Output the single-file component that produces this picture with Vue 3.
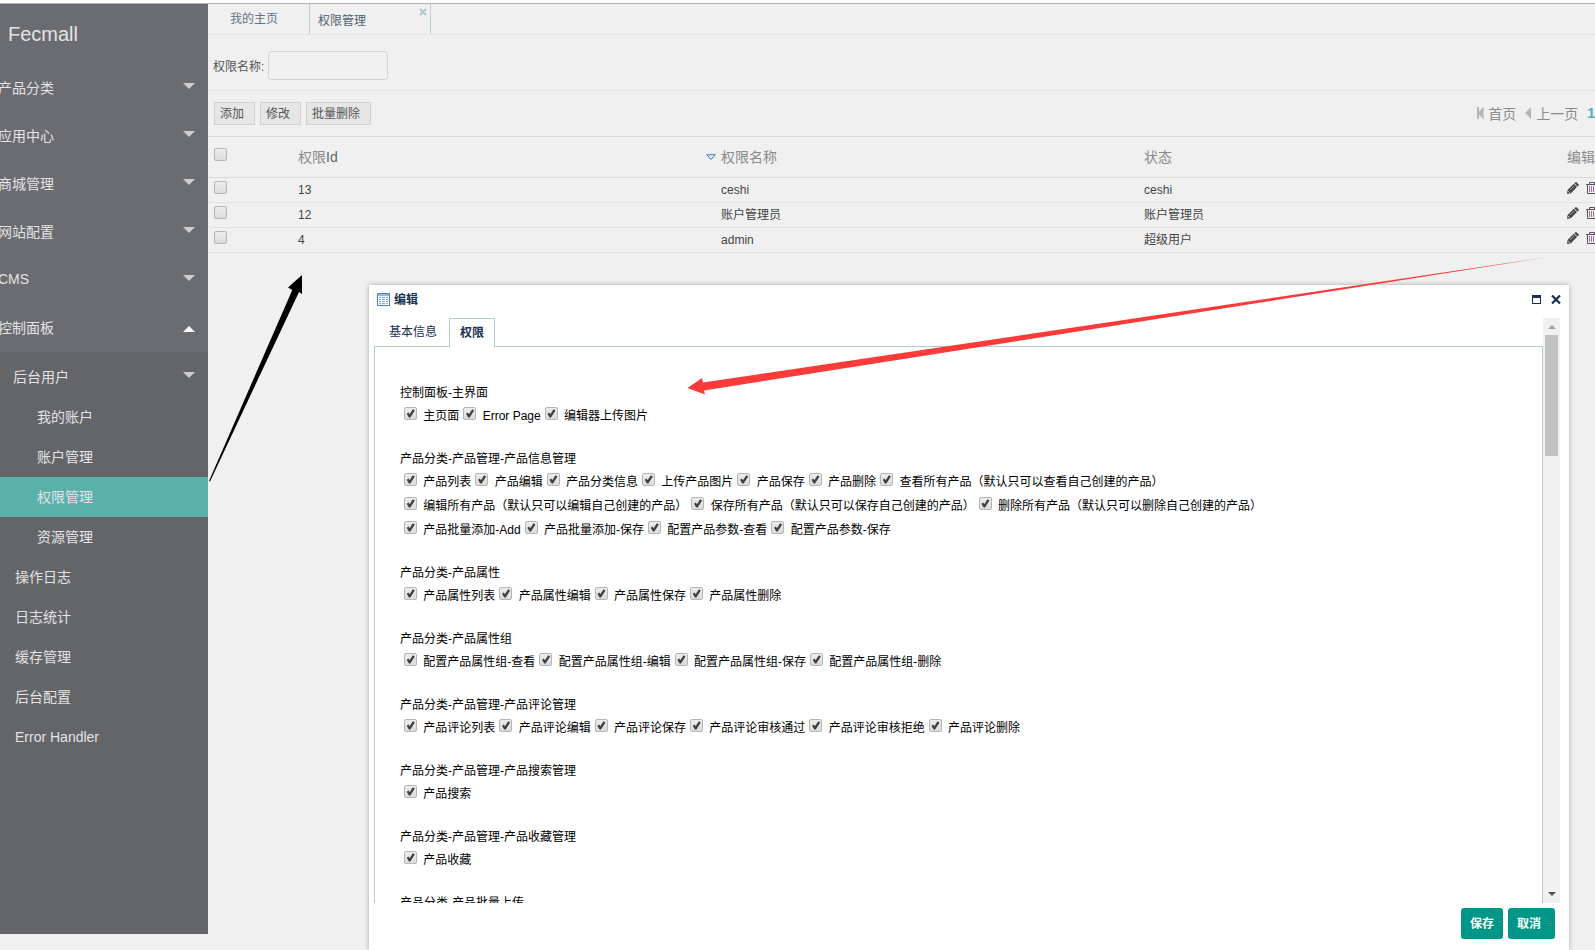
<script setup>
import { ref } from 'vue'

const menu = [
  { label: '产品分类', open: false },
  { label: '应用中心', open: false },
  { label: '商城管理', open: false },
  { label: '网站配置', open: false },
  { label: 'CMS', open: false },
  { label: '控制面板', open: true },
]
const userMenu = [
  { label: '我的账户', active: false },
  { label: '账户管理', active: false },
  { label: '权限管理', active: true },
  { label: '资源管理', active: false },
]
const panelMenu = ['操作日志', '日志统计', '缓存管理', '后台配置', 'Error Handler']

const keyword = ref('')
const rows = [
  { id: 13, name: 'ceshi', status: 'ceshi' },
  { id: 12, name: '账户管理员', status: '账户管理员' },
  { id: 4, name: 'admin', status: '超级用户' },
]

const make = (title, items) => ({ title, items })
const groups = [
  make('控制面板-主界面', ['主页面', 'Error Page', '编辑器上传图片']),
  make('产品分类-产品管理-产品信息管理', [
    '产品列表', '产品编辑', '产品分类信息', '上传产品图片', '产品保存', '产品删除',
    '查看所有产品（默认只可以查看自己创建的产品）',
    '编辑所有产品（默认只可以编辑自己创建的产品）',
    '保存所有产品（默认只可以保存自己创建的产品）',
    '删除所有产品（默认只可以删除自己创建的产品）',
    '产品批量添加-Add', '产品批量添加-保存', '配置产品参数-查看', '配置产品参数-保存',
  ]),
  make('产品分类-产品属性', ['产品属性列表', '产品属性编辑', '产品属性保存', '产品属性删除']),
  make('产品分类-产品属性组', ['配置产品属性组-查看', '配置产品属性组-编辑', '配置产品属性组-保存', '配置产品属性组-删除']),
  make('产品分类-产品管理-产品评论管理', ['产品评论列表', '产品评论编辑', '产品评论保存', '产品评论审核通过', '产品评论审核拒绝', '产品评论删除']),
  make('产品分类-产品管理-产品搜索管理', ['产品搜索']),
  make('产品分类-产品管理-产品收藏管理', ['产品收藏']),
  make('产品分类-产品批量上传', []),
]
</script>

<template>
  <div class="page">
    <aside class="sidebar">
      <div class="brand">Fecmall</div>
      <nav>
        <a v-for="m in menu" :key="m.label" href="#" class="top-item">
          <span>{{ m.label }}</span>
          <i class="caret" :class="{ up: m.open }"></i>
        </a>
        <div class="submenu">
          <a href="#" class="sub-head"><span>后台用户</span><i class="caret"></i></a>
          <a v-for="u in userMenu" :key="u.label" href="#" class="user-item" :class="{ active: u.active }">{{ u.label }}</a>
          <a v-for="p in panelMenu" :key="p" href="#" class="sub-item">{{ p }}</a>
        </div>
      </nav>
    </aside>

    <main class="main">
      <div class="tabs">
        <a href="#" class="tab">我的主页</a>
        <div class="tab current">
          <a href="#">权限管理</a>
          <button class="tab-close" aria-label="关闭">
            <svg width="8" height="8" viewBox="0 0 8 8"><path d="M1 1L7 7M7 1L1 7" stroke="#b3cbcf" stroke-width="2.300" /></svg>
          </button>
        </div>
      </div>

      <div class="search">
        <label for="kw">权限名称:</label>
        <input id="kw" v-model="keyword" type="text" />
      </div>

      <div class="toolbar">
        <div class="actions">
          <button>添加</button>
          <button>修改</button>
          <button>批量删除</button>
        </div>
        <div class="pager">
          <a href="#">
            <svg width="7" height="12" viewBox="0 0 7 12"><path d="M0 0H2V12H0ZM6.500 0V12L2 6Z" fill="#b5b5b5" /><path d="M2 4.500L6.500 0V3L4.500 6L6.500 9V12L2 7.500Z" fill="#b5b5b5" /></svg>首页</a>
          <a href="#">
            <svg width="7" height="12" viewBox="0 0 7 12"><path d="M6 0V12L0 6Z" fill="#b5b5b5" /></svg>上一页</a>
          <a href="#" class="num">1</a>
        </div>
      </div>

      <table class="grid">
        <colgroup><col class="c-check" /><col class="c-data" /><col class="c-data" /><col class="c-data" /><col /></colgroup>
        <thead>
          <tr>
            <th><input type="checkbox" aria-label="全选" /></th>
            <th>
              <div class="sortable">
                <span>权限<b>Id</b></span>
                <svg width="10" height="7" viewBox="0 0 10 7"><path d="M.8.700H9.200L5 5.500Z" fill="#d3f1fb" stroke="#3f7fa8" /></svg>
              </div>
            </th>
            <th>权限名称</th>
            <th>状态</th>
            <th>编辑</th>
          </tr>
        </thead>
        <tbody>
          <tr v-for="r in rows" :key="r.id">
            <td><input type="checkbox" :aria-label="'选择 ' + r.id" /></td>
            <td>{{ r.id }}</td>
            <td>{{ r.name }}</td>
            <td>{{ r.status }}</td>
            <td>
              <div class="ops">
                <button aria-label="修改">
                  <svg width="12" height="12" viewBox="0 0 12 12">
                    <path d="M0 12L.6 8L6.800 1.800L10 5L3.900 11.300Z" fill="#484848" />
                    <path d="M7.300 1.300L8.500 .2Q9 -.1 9.500 .3L11.700 2.400Q12.100 2.900 11.700 3.400L10.500 4.600Z" fill="#484848" />
                    <path d="M3 8L7.200 3.800" stroke="#b5b5b5" stroke-width=".8" />
                    <path d="M1.300 9.300L2.700 10.700" stroke="#f0f0f0" />
                  </svg>
                </button>
                <button aria-label="删除">
                  <svg width="12" height="12" viewBox="0 0 12 12" fill="none" stroke="#555">
                    <path d="M0 2.500H12M3.500 2V.5H8.500V2M1.500 3V11.500H10.500V3" />
                    <path d="M3.500 4V10M5.500 4V10M7.500 4V10" stroke="#a76cab" />
                  </svg>
                </button>
              </div>
            </td>
          </tr>
        </tbody>
      </table>
    </main>

    <section class="dialog" role="dialog" aria-label="编辑">
      <header class="dialog-head">
        <svg width="13" height="13" viewBox="0 0 13 13">
          <path d="M.5.500H12.500V12.500H.5Z" fill="#fff" stroke="#4a7ec2" />
          <path d="M1 1H12V3H1Z" fill="#8fbdea" />
          <path d="M2 4.500H4M5 4.500H8M9 4.500H11M2 6.500H4M5 6.500H8M9 6.500H11M2 8.500H4M5 8.500H8M9 8.500H11M2 10.500H4M5 10.500H8M9 10.500H11" stroke="#7ba3d6" />
        </svg>
        <h1>编辑</h1>
        <button aria-label="最大化">
          <svg width="9" height="9" viewBox="0 0 9 9"><path d="M0 0H9V9H0ZM1 3V8H8V3Z" fill="#183152" fill-rule="evenodd" /></svg>
        </button>
        <button aria-label="关闭">
          <svg width="10" height="9" viewBox="0 0 10 9"><path d="M1 .5L9 8.500M9 .5L1 8.500" stroke="#183152" stroke-width="2.200" /></svg>
        </button>
      </header>

      <div class="dialog-body">
        <div class="content">
          <div class="dialog-tabs">
            <a href="#">基本信息</a>
            <a href="#" class="on">权限</a>
          </div>
          <div class="panel">
            <fieldset v-for="g in groups" :key="g.title" class="group">
              <legend>{{ g.title }}</legend>
              <div class="items">
                <label v-for="i in g.items" :key="i"><input type="checkbox" checked />&#32;{{ i }}</label>
              </div>
            </fieldset>
          </div>
        </div>
        <div class="scroll" aria-hidden="true">
          <i class="arrow-up"></i>
          <i class="thumb"></i>
          <i class="arrow-down"></i>
        </div>
      </div>

      <footer class="dialog-foot">
        <button>保存</button>
        <button class="cancel">取消</button>
      </footer>
    </section>

    <svg class="pointers" width="1595" height="520" viewBox="0 0 1595 520" aria-hidden="true">
      <path d="M302 275L288 287.500L292.300 290L209 481L210 481.500L299 292L302 294Z" fill="#000" />
      <path d="M687.500 388L702 378L703 382.500L1552 256.500L704 390.500L705 394.500Z" fill="#fb3a3a" />
    </svg>
  </div>
</template>

<style>
body {
  margin: 0;
  background: #f0f0f0;
}
</style>

<style scoped>
.page {
  position: relative;
  display: flex;
  box-sizing: border-box;
  height: 100vh;
  padding-top: 4px;
  overflow: hidden;
  background: linear-gradient(#fff 3px, #b2b2b4 3px, #b2b2b4 4px, #f0f0f0 4px);
  font-family: "Liberation Sans", "Noto Sans CJK SC", sans-serif;
  font-size: 12px;
  color: #444;
}
a {
  color: inherit;
  text-decoration: none;
}
button {
  padding: 0;
  border: 0;
  background: none;
  font: inherit;
  color: inherit;
}
svg {
  display: block;
}

/* sidebar */
.sidebar {
  flex: none;
  width: 208px;
  margin-bottom: 16px;
  background: #646569;
  color: #e3e3e4;
  font-size: 14px;
  overflow: hidden;
}
.brand {
  height: 60px;
  padding-left: 8px;
  background: #6b6c71;
  line-height: 60px;
  font-size: 20px;
}
.top-item,
.sub-head {
  display: flex;
  justify-content: space-between;
  align-items: center;
  padding-right: 13px;
}
.top-item {
  height: 48px;
  background: #6b6c71;
  text-indent: -2px;
}
.top-item span {
  margin-bottom: 2px;
}
.caret {
  margin-bottom: 4px;
  border: 6px solid transparent;
  border-bottom-width: 0;
  border-top-color: #cdcdce;
}
.caret.up {
  margin: 2px 0 0;
  border-width: 0 6px 6px;
  border-bottom-color: #fff;
}
.submenu {
  padding-top: 5px;
  line-height: 40px;
}
.sub-head {
  height: 40px;
  padding-left: 13px;
}
.user-item,
.sub-item {
  display: block;
  padding-left: 15px;
}
.user-item {
  padding-left: 37px;
}
.user-item.active {
  background: #59b1aa;
}

/* main area */
.main {
  flex: 1;
  min-width: 0;
  overflow: hidden;
}
.tabs {
  display: flex;
  height: 30px;
  border-bottom: 1px solid #e3e4e5;
  line-height: 30px;
  color: #66717f;
}
.tab {
  box-sizing: border-box;
  width: 101px;
  padding-left: 22px;
}
.tab.current {
  display: flex;
  justify-content: space-between;
  align-items: flex-start;
  width: 122px;
  padding: 0 3px 0 8px;
  border: solid #b8d0d3;
  border-width: 0 1px;
  line-height: 34px;
  color: #4f6073;
}
.tab-close {
  margin-top: 4px;
}
.search {
  display: flex;
  align-items: center;
  gap: 4px;
  box-sizing: border-box;
  height: 56px;
  padding: 5px 5px 0;
  border-bottom: 1px solid #e3e3e3;
  color: #555;
}
.search input {
  box-sizing: border-box;
  width: 120px;
  height: 29px;
  border: 1px solid #d3d3dc;
  border-radius: 3px;
  background: #f0f0f0;
}
.toolbar {
  display: flex;
  justify-content: space-between;
  align-items: center;
  height: 45px;
  padding-left: 6px;
  border-bottom: 1px solid #dadada;
}
.actions {
  display: flex;
  gap: 5px;
}
.actions button {
  height: 23px;
  padding: 1px 10px 0 5px;
  border: 1px solid #d0d0d0;
  background: #e6e6e6;
  line-height: 20px;
  color: #555;
}
.pager {
  display: flex;
  gap: 9px;
  padding-bottom: 2px;
  font-size: 14px;
  color: #8b8b8b;
}
.pager a {
  display: flex;
  align-items: center;
  gap: 4px;
}
.pager .num {
  font-weight: bold;
  color: #4fb3ac;
}
.grid {
  width: 100%;
  table-layout: fixed;
  border-collapse: collapse;
}
.c-check {
  width: 85px;
}
.c-data {
  width: 30.5%;
}
.grid th,
.grid td {
  height: 24px;
  padding: 0 0 0 5px;
  border-bottom: 1px solid #e2e2e2;
  line-height: 22px;
  text-align: left;
  white-space: nowrap;
}
.grid th {
  height: 40px;
  border-bottom-color: #dcdcdc;
  font-size: 14px;
  font-weight: normal;
  color: #8a8a8a;
}
.grid th b {
  font-weight: normal;
  color: #666;
}
.grid th:first-child,
.grid td:first-child {
  padding: 0 0 5px 6px;
}
.grid td:first-child {
  height: 19px;
  line-height: 16px;
}
.grid th:first-child {
  height: 35px;
}
.grid td:first-child input,
.grid th:first-child input {
  display: block;
  margin: 0;
}
.sortable {
  display: flex;
  justify-content: space-between;
  align-items: center;
}
.ops {
  display: flex;
  gap: 7px;
  padding-bottom: 4px;
}

input[type="checkbox"] {
  appearance: none;
  position: relative;
  box-sizing: border-box;
  width: 13px;
  height: 13px;
  border: 1px solid #b5b5b5;
  border-radius: 2px;
  background: linear-gradient(#ececec, #dcdcdc);
}
input[type="checkbox"]:checked::before {
  content: "";
  position: absolute;
  inset: 1px;
  background: #404040;
  clip-path: polygon(8% 52%, 28% 40%, 40% 58%, 76% 4%, 98% 16%, 46% 96%, 30% 92%);
}

/* dialog */
.dialog {
  position: absolute;
  inset: 285px 26px 0 369px;
  display: flex;
  flex-direction: column;
  background: #fff;
  box-shadow: 0 0 5px rgba(0, 0, 0, 0.3);
  color: #183152;
}
.dialog-head {
  display: flex;
  align-items: center;
  gap: 10px;
  height: 28px;
  margin-bottom: 5px;
  padding: 0 8px;
}
.dialog-head h1 {
  flex: 1;
  margin: 0 0 2px -6px;
  font-size: 12px;
  font-weight: bold;
}
.dialog-body {
  display: flex;
  flex: 1;
  min-height: 0;
  padding: 0 9px 0 5px;
}
.content {
  flex: 1;
  min-width: 0;
  overflow: hidden;
}
.dialog-tabs {
  position: relative;
  display: flex;
  align-items: flex-start;
  gap: 12px;
  height: 29px;
  margin-bottom: -1px;
  padding-left: 15px;
  line-height: 28px;
}
.dialog-tabs .on {
  height: 28px;
  padding: 0 10px;
  border: 1px solid #b3cdd2;
  border-bottom: 0;
  background: #fff;
  font-weight: bold;
}
.panel {
  padding: 35px 25px 0;
  border: 1px solid #b3cdd2;
  color: #000;
}
.group {
  min-width: 0;
  max-width: 934px;
  margin: 0 0 20px;
  padding: 0;
  border: 0;
}
.group legend {
  padding: 0;
  line-height: 22px;
}
.items {
  line-height: 24px;
}
.items label {
  display: inline-block;
  height: 24px;
  vertical-align: top;
  white-space: nowrap;
}
.items input {
  margin: 0 3px 0 4px;
  vertical-align: 0;
}
.scroll {
  display: flex;
  flex-direction: column;
  align-items: center;
  width: 17px;
  background: #f0f0f0;
}
.arrow-up,
.arrow-down {
  border: 4px solid transparent;
}
.arrow-up {
  margin: 7px 0 6px;
  border-top-width: 0;
  border-bottom-color: #a0a0a0;
}
.thumb {
  width: 13px;
  height: 121px;
  background: #c1c1c1;
}
.arrow-down {
  margin: auto 0 7px;
  border-bottom-width: 0;
  border-top-color: #505050;
}
.dialog-foot {
  display: flex;
  justify-content: flex-end;
  gap: 5px;
  padding: 5px 14px 11px;
}
.dialog-foot button {
  height: 31px;
  padding: 0 9px 3px;
  border-radius: 3px;
  background: #009688;
  font-weight: bold;
  color: #fff;
}
.dialog-foot .cancel {
  padding-right: 14px;
}

.pointers {
  position: absolute;
  top: 0;
  left: 0;
  pointer-events: none;
}
</style>
